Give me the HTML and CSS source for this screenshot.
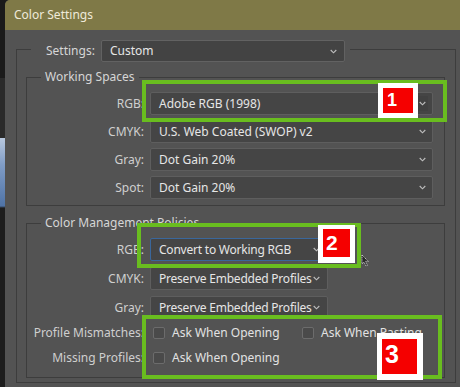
FILE: index.html
```html
<!DOCTYPE html>
<html>
<head>
<meta charset="utf-8">
<link rel="stylesheet" href="styles.css">
</head>
<body>
<div class="screen">
  <div class="side"></div>
  <div class="window">
    <div class="titlebar">Color Settings</div>
    <div class="content">
      <fieldset class="outer">
        <legend class="outer-legend">
          <div class="settings-row">
            <span class="settings-label">Settings:</span>
            <div class="select select-settings"><span>Custom</span><span class="chev-box"><svg class="chev" viewBox="0 0 8 5"><polyline points="0.8,0.8 4,4 7.2,0.8"/></svg></span></div>
          </div>
        </legend>

        <fieldset class="group ws">
          <legend>Working Spaces</legend>
          <div class="rows">
            <div class="row"><label>RGB:</label><div class="select select-wide"><span>Adobe RGB (1998)</span><span class="chev-box boxed"><svg class="chev" viewBox="0 0 8 5"><polyline points="0.8,0.8 4,4 7.2,0.8"/></svg></span></div></div>
            <div class="row"><label>CMYK:</label><div class="select select-wide"><span>U.S. Web Coated (SWOP) v2</span><span class="chev-box"><svg class="chev" viewBox="0 0 8 5"><polyline points="0.8,0.8 4,4 7.2,0.8"/></svg></span></div></div>
            <div class="row"><label>Gray:</label><div class="select select-wide"><span>Dot Gain 20%</span><span class="chev-box"><svg class="chev" viewBox="0 0 8 5"><polyline points="0.8,0.8 4,4 7.2,0.8"/></svg></span></div></div>
            <div class="row"><label>Spot:</label><div class="select select-wide"><span>Dot Gain 20%</span><span class="chev-box"><svg class="chev" viewBox="0 0 8 5"><polyline points="0.8,0.8 4,4 7.2,0.8"/></svg></span></div></div>
          </div>
        </fieldset>

        <fieldset class="group cmp">
          <legend>Color Management Policies</legend>
          <div class="rows rows-cmp">
            <div class="row"><label>RGB:</label><div class="select select-policy focused"><span>Convert to Working RGB</span><span class="chev-box"><svg class="chev" viewBox="0 0 8 5"><polyline points="0.8,0.8 4,4 7.2,0.8"/></svg></span></div></div>
            <div class="row"><label>CMYK:</label><div class="select select-policy"><span>Preserve Embedded Profiles</span><span class="chev-box"><svg class="chev" viewBox="0 0 8 5"><polyline points="0.8,0.8 4,4 7.2,0.8"/></svg></span></div></div>
            <div class="row"><label>Gray:</label><div class="select select-policy"><span>Preserve Embedded Profiles</span><span class="chev-box"><svg class="chev" viewBox="0 0 8 5"><polyline points="0.8,0.8 4,4 7.2,0.8"/></svg></span></div></div>
          </div>
          <div class="rows rows-check">
            <div class="row row-check">
              <label>Profile Mismatches:</label>
              <div class="checks">
                <span class="check-item first"><span class="box"></span>Ask When Opening</span>
                <span class="check-item"><span class="box"></span>Ask When Pasting</span>
              </div>
            </div>
            <div class="row row-check">
              <label>Missing Profiles:</label>
              <div class="checks">
                <span class="check-item first"><span class="box"></span>Ask When Opening</span>
              </div>
            </div>
          </div>
        </fieldset>
      </fieldset>
    </div>
  </div>

  <div class="hl hl-1"></div>
  <div class="hl hl-2"></div>
  <div class="hl hl-3"></div>
  <div class="tag tag-1"><span class="num">1</span></div>
  <div class="tag tag-2"><span class="num">2</span></div>
  <div class="tag tag-3"><span class="num">3</span></div>
  <svg class="cursor" viewBox="0 0 8 13"><path d="M1 1 L1 10 L3 8 L5 12 L6.5 11.3 L4.6 7.4 L7.4 7.4 Z"/></svg>
</div>
</body>
</html>
```

FILE: styles.css
```css
* { box-sizing: border-box; margin: 0; padding: 0; }
html, body { width: 460px; height: 387px; overflow: hidden; }
body {
  background: #1c1c1c;
  font-family: "Noto Sans", "Open Sans", sans-serif;
  font-size: 12px;
  line-height: 16px;
  color: #d2d2d2;
}
.screen { position: relative; display: flex; height: 387px; }
.side {
  width: 5px;
  flex: none;
  background: linear-gradient(to bottom,
    #1a1a1a 0, #1a1a1a 78px, #2a2a2a 78px, #2a2a2a 138px,
    #b8c8de 138px, #7f9cc6 165px, #4f73a6 206px, #1d1d1d 208px, #1d1d1d 100%);
}
.window {
  flex: 1;
  display: flex;
  flex-direction: column;
  background: #535353;
  border-top-left-radius: 5px;
  overflow: hidden;
}
.titlebar {
  height: 30px;
  flex: none;
  background: #7f7947;
  color: #efeada;
  padding-left: 9px;
  line-height: 30px;
}
.content { flex: 1; padding: 6px 0 0 11px; }

fieldset {
  border: 1px solid #3d3d3d;
  min-width: 0;
}
.outer {
  width: 440px;
  padding: 0 10px 4px 9px;
}
.outer-legend {
  margin-left: 5px;
  padding: 4px 5px 0 15px;
}
.settings-row { display: flex; align-items: center; gap: 6px; }
.settings-label { color: #d6d6d6; }

.select {
  height: 23px;
  background: #454545;
  border: 1px solid #5e5e5e;
  border-radius: 2px;
  padding: 0 4px 0 8px;
  display: flex;
  align-items: center;
  justify-content: space-between;
  color: #e6e6e6;
  white-space: nowrap;
}
.select-settings { width: 244px; height: 22px; border-color: #626262; background: #434343; }
.select-wide { width: 283px; }
.select-policy { width: 178px; padding-right: 5px; letter-spacing: -0.22px; }
.select.focused { border-color: #3a679c; }
.chev-box {
  display: flex;
  align-items: center;
  justify-content: center;
  width: 12px;
  height: 15px;
}
.chev-box.boxed { background: #414141; }
.chev { width: 7px; height: 5px; fill: none; stroke: #bdbdbd; stroke-width: 1.3; }

.group { width: 419px; padding: 0 10px 6px 0; }
.group legend {
  margin-left: 14px;
  padding: 0 4px;
  line-height: 16px;
  color: #d6d6d6;
}
.ws { margin-top: 7px; }
.cmp { margin-top: 9px; padding-bottom: 9px; }

.rows { display: flex; flex-direction: column; gap: 5px; margin-top: 7px; }
.rows-cmp { gap: 6px; }
.rows-check { gap: 5px; margin-top: 4px; }
.row {
  display: grid;
  grid-template-columns: 117px auto;
  column-gap: 6px;
  align-items: center;
}
.row label { text-align: right; color: #cfcfcf; white-space: nowrap; }
.row-check { height: 20px; }
.checks { display: flex; align-items: center; padding-left: 3px; }
.check-item { display: flex; align-items: center; gap: 7px; color: #e2e2e2; white-space: nowrap; }
.check-item.first { width: 149px; }
.box {
  width: 12px;
  height: 12px;
  border: 1px solid #6c6c6c;
  border-radius: 2px;
  background: #4a4a4a;
}

/* annotations */
.hl { position: absolute; border: 4px solid #69bd1f; }
.hl-1 { left: 142px; top: 80px; width: 305px; height: 42px; }
.hl-2 { left: 137px; top: 223px; width: 224px; height: 45px; }
.hl-3 { left: 142px; top: 315px; width: 300px; height: 64px; }

.tag { position: absolute; background: #ffffff; display: flex; }
.tag .num {
  flex: 1;
  background: #f50000;
  color: #ffffff;
  font-family: "Liberation Sans", Arial, sans-serif;
  font-weight: bold;
}
.tag-1 { left: 378px; top: 83px; width: 40px; height: 35px; padding: 5px 5px 5px 5px; }
.tag-1 .num { font-size: 18px; line-height: 24px; padding-left: 4px; }
.tag-2 { left: 318px; top: 225px; width: 37px; height: 38px; padding: 4px 5px 6px 5px; }
.tag-2 .num { font-size: 21px; line-height: 28px; padding-left: 3px; }
.tag-3 { left: 377px; top: 333px; width: 46px; height: 47px; padding: 6px 6px 6px 5px; }
.tag-3 .num { font-size: 25px; line-height: 31px; padding-left: 3px; }

.cursor {
  position: absolute;
  left: 361px;
  top: 254px;
  width: 8px;
  height: 13px;
  fill: #2a2a2a;
  stroke: #dcdcdc;
  stroke-width: 0.9;
  stroke-dasharray: 1.2 1;
}
```
